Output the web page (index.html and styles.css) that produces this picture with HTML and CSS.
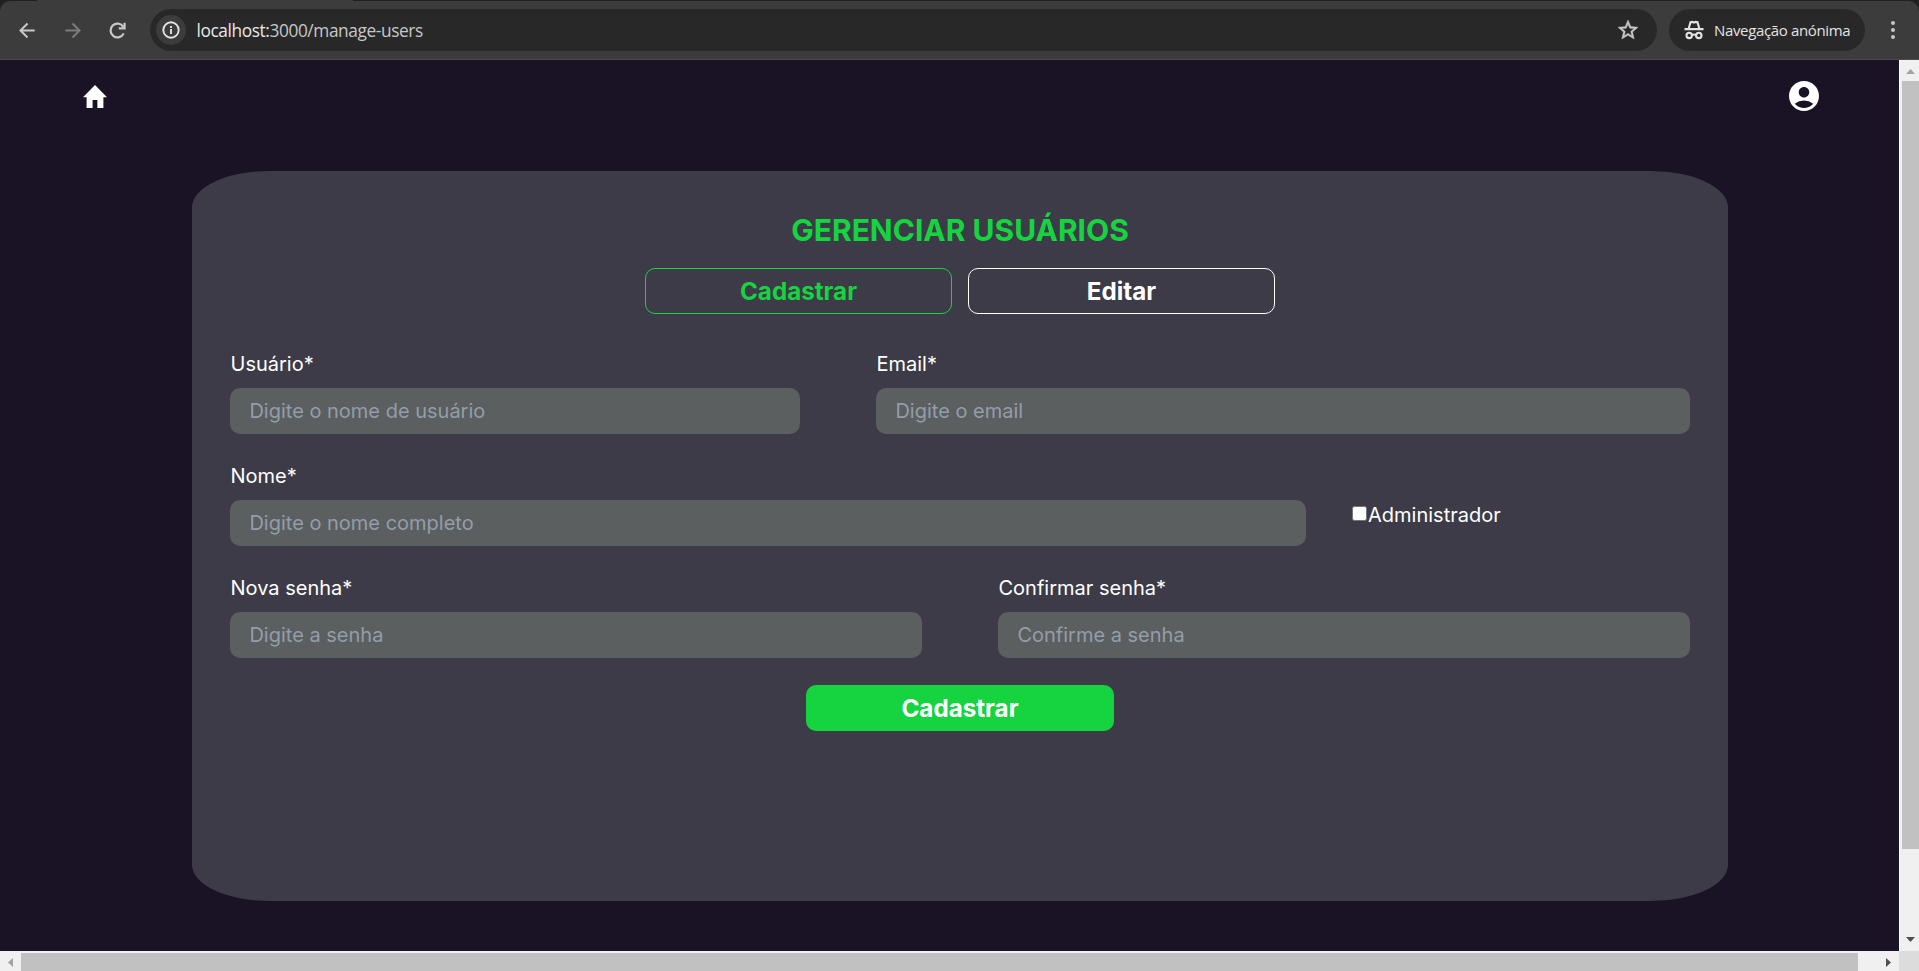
FILE: index.html
```html
<!DOCTYPE html>
<html lang="pt">
<head>
<meta charset="utf-8">
<title>Gerenciar usuários</title>
<link rel="stylesheet" href="styles.css">
</head>
<body>
<div class="window">
  <div class="tab-strip"><div class="browser-tab"></div></div>
  <header class="toolbar">
    <div class="nav-buttons">
      <svg class="nav-icon" viewBox="0 0 24 24"><path d="M19.500 12H5M12 4.700 4.700 12l7.300 7.300" fill="none" stroke="#c7c7c7" stroke-width="2.100"/></svg>
      <svg class="nav-icon" viewBox="0 0 24 24"><path d="M4.500 12H19M12 4.700l7.300 7.300-7.300 7.300" fill="none" stroke="#7b7b7b" stroke-width="2.100"/></svg>
      <svg class="nav-icon" viewBox="0 0 24 24"><path d="M18.500 15a7.200 7.200 0 1 1-.4-6.800l1 1.300M19.400 3.800V9.800H13.300" fill="none" stroke="#c7c7c7" stroke-width="2.300"/></svg>
    </div>
    <div class="omnibox">
      <span class="site-info"><svg class="info-icon" viewBox="0 0 18 18"><circle cx="9" cy="9" r="7.700" fill="none" stroke="#e3e3e3" stroke-width="1.900"/><path d="M9 8v5M9 5v1.900" stroke="#e3e3e3" stroke-width="1.900"/></svg></span>
      <span class="url"><span class="host">localhost:</span>3000/manage-users</span>
      <svg class="star" viewBox="0 0 24 24"><path fill="#c7c7c7" stroke="#c7c7c7" stroke-width=".5" d="M22 9.240l-7.190-.62L12 2 9.190 8.630 2 9.240l5.460 4.730L5.820 21 12 17.270 18.180 21l-1.630-7.030L22 9.240zM12 15.400l-3.760 2.270 1-4.280-3.320-2.880 4.380-.38L12 6.100l1.710 4.040 4.380.38-3.320 2.880 1 4.280L12 15.400z"/></svg>
    </div>
    <div class="incognito">
      <svg class="spy" viewBox="0 0 20 20" fill="none" stroke="#e3e3e3" stroke-width="2.100"><path d="M.5 9.100h19M4.700 8.500 6.500 2.100 8.500 1.900 10 2.600 11.500 1.900 13.500 2.100 15.300 8.500M8 15.200q2-1.300 4 0"/><circle cx="5.200" cy="15.400" r="2.700"/><circle cx="14.800" cy="15.400" r="2.700"/></svg>
      <span class="incognito-label">Navegação anónima</span>
    </div>
    <svg class="menu-dots" viewBox="0 0 4 18" fill="#c7c7c7"><circle cx="2" cy="2" r="2"/><circle cx="2" cy="9" r="2"/><circle cx="2" cy="16" r="2"/></svg>
  </header>

  <div class="viewport">
    <div class="page">
      <nav class="page-nav">
        <svg class="home" viewBox="2 3 20 17" preserveAspectRatio="none"><path fill="#fff" d="M10 20v-6h4v6h5v-8h3L12 3 2 12h3v8z"/></svg>
        <svg class="account" viewBox="2 2 20 20"><path fill="#fff" d="M12 2C6.480 2 2 6.480 2 12s4.480 10 10 10 10-4.480 10-10S17.520 2 12 2zm0 4c1.930 0 3.500 1.570 3.500 3.500S13.930 13 12 13s-3.500-1.570-3.500-3.500S10.070 6 12 6zm0 14c-2.030 0-4.430-.82-6.140-2.880a9.947 9.947 0 0 1 12.280 0C16.430 19.180 14.030 20 12 20z"/></svg>
      </nav>
      <main class="card">
        <h1 class="title">GERENCIAR USUÁRIOS</h1>
        <div class="tabs">
          <button class="tab tab-active">Cadastrar</button>
          <button class="tab">Editar</button>
        </div>
        <form class="form">
          <div class="row row-user">
            <label class="field"><span class="label">Usuário*</span><input class="input" type="text" placeholder="Digite o nome de usuário"></label>
            <label class="field"><span class="label">Email*</span><input class="input" type="text" placeholder="Digite o email"></label>
          </div>
          <div class="row row-name">
            <label class="field"><span class="label">Nome*</span><input class="input" type="text" placeholder="Digite o nome completo"></label>
            <label class="admin"><input class="check" type="checkbox">Administrador</label>
          </div>
          <div class="row row-password">
            <label class="field"><span class="label">Nova senha*</span><input class="input" type="password" placeholder="Digite a senha"></label>
            <label class="field"><span class="label">Confirmar senha*</span><input class="input" type="password" placeholder="Confirme a senha"></label>
          </div>
          <button class="submit" type="button">Cadastrar</button>
        </form>
      </main>
    </div>
    <div class="scroll-v">
      <svg class="arrow-v" viewBox="0 0 9 5"><path fill="#a3a3a3" d="M0 5 4.500 0 9 5z"/></svg>
      <div class="thumb-v"></div>
      <svg class="arrow-v arrow-down" viewBox="0 0 9 5"><path fill="#505050" d="M0 0h9L4.500 5z"/></svg>
    </div>
    <div class="scroll-h">
      <svg class="arrow-h" viewBox="0 0 5 9"><path fill="#a3a3a3" d="M5 0v9L0 4.500z"/></svg>
      <div class="thumb-h"></div>
      <svg class="arrow-h arrow-right" viewBox="0 0 5 9"><path fill="#505050" d="M0 0v9l5-4.500z"/></svg>
    </div>
    <div class="corner"></div>
  </div>
</div>
</body>
</html>
```
FILE: styles.css
```css
* { box-sizing: border-box; }
body { margin: 0; overflow: hidden; background: #1f2020; font-family: Inter, sans-serif; }
svg { display: block; flex: none; }

.window { display: flex; flex-direction: column; width: 1919px; height: 971px; }
.tab-strip { flex: none; height: 1px; padding-left: 37px; }
.browser-tab { width: 316px; height: 1px; background: #3c3c3c; }

/* Browser toolbar */
.toolbar {
  display: flex; align-items: center; flex: none; height: 59px;
  padding: 0 24.500px 0 16px;
  background: #3c3c3c; border-bottom: 1px solid #4a4a4a; border-radius: 10px 10px 0 0;
}
.nav-buttons { display: flex; gap: 22px; width: 134px; }
.nav-icon { width: 23px; height: 23px; }
.omnibox {
  display: flex; align-items: center; width: 1507px; height: 42px;
  padding: 0 17.500px 0 6px; border-radius: 21px; background: #282828;
}
.site-info {
  display: flex; align-items: center; justify-content: center;
  width: 30px; height: 30px; border-radius: 50%; background: #3c3c3c;
}
.info-icon { width: 18px; height: 18px; }
.url { flex: 1; margin-left: 10.500px; padding-top: 1px; font: 17.300px "Open Sans", sans-serif; letter-spacing: -.4px; color: #c7c7c7; white-space: nowrap; }
.host { color: #e8e8e8; }
.star { width: 24px; height: 24px; }
.incognito {
  display: flex; align-items: center; gap: 10px; width: 196px; height: 42px; margin-left: 12px;
  padding-left: 15px; border-radius: 21px; background: #282828;
}
.spy { width: 20px; height: 20px; }
.incognito-label { font: 15px "Open Sans", sans-serif; letter-spacing: -.35px; color: #e3e3e3; white-space: nowrap; }
.menu-dots { width: 4px; height: 18px; margin-left: auto; }

/* Viewport with classic scrollbars */
.viewport { display: grid; grid-template: 891px 20px / 1899px 20px; }
.page { overflow: hidden; background: #191325; }
.page-nav { display: flex; justify-content: space-between; align-items: center; height: 72px; padding: 0 80px 0 83px; }
.home { width: 24px; height: 23px; }
.account { width: 30px; height: 30px; }

.card {
  display: flex; flex-direction: column; align-items: center;
  width: 1536px; height: 730px; margin: 39px 0 0 192px; padding: 41px 38px 0;
  border-radius: 5%; background: #3c3b47;
}
.title { margin: 0; font-size: 30px; line-height: 36px; font-weight: 700; color: #16d43f; }
.tabs { display: flex; gap: 16px; margin-top: 20px; }
.tab {
  width: 307px; height: 46px; padding: 0; border: 1px solid #fff; border-radius: 10px;
  background: none; font: 700 24.200px Inter, sans-serif; color: #fff;
}
.tab-active { border-color: #16d43f; color: #16d43f; }

.form { display: flex; flex-direction: column; gap: 27px; width: 100%; margin-top: 35px; }
.row { display: grid; height: 85px; }
.row-user { grid-template-columns: 570px 814px; column-gap: 76px; }
.row-name { grid-template-columns: 1076px 1fr; column-gap: 46px; }
.row-password { grid-template-columns: 692px 692px; column-gap: 76px; }
.field { display: flex; flex-direction: column; justify-content: space-between; font-size: 20px; line-height: 30px; color: #fff; }
.label { padding-left: .5px; }
.input {
  width: 100%; height: 46px; padding: 0 19.400px; border: 0; border-radius: 10px;
  background: #5b5f5f; font: 20px Inter, sans-serif; color: #fff;
}
.input::placeholder { color: #939dab; opacity: 1; }
.admin { display: flex; align-items: center; height: 30px; margin-top: 39px; font-size: 20px; color: #fff; }
.check {
  appearance: none; width: 15px; height: 15px; margin: 0 1px 3px 0;
  border: 1px solid #767676; border-radius: 2.500px; background: #fff;
}
.submit {
  align-self: center; width: 308px; height: 46px; padding: 0; border: 0; border-radius: 10px;
  background: #16d43f; font: 700 24.200px Inter, sans-serif; color: #fff;
}

.scroll-v { display: flex; flex-direction: column; align-items: center; padding: 9px 0 9px 1px; background: #f0f0f0; border-left: 1px solid #fff; }
.arrow-v { width: 9px; height: 5px; }
.thumb-v { width: 17px; height: 768px; margin-top: 7px; background: #c1c1c1; }
.arrow-down { margin-top: auto; }
.scroll-h { display: flex; align-items: center; padding: 2px 8px 0; background: #f0f0f0; }
.arrow-h { width: 5px; height: 9px; }
.thumb-h { width: 1837px; height: 18px; margin-left: 8px; background: #c1c1c1; }
.arrow-right { margin-left: auto; }
.corner { background: #dcdcdc; }
```
